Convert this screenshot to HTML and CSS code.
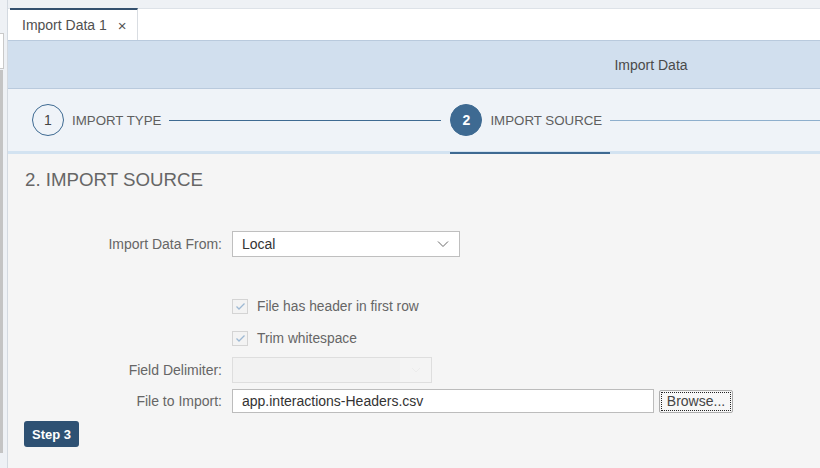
FILE: index.html
```html
<!DOCTYPE html>
<html>
<head>
<meta charset="utf-8">
<link rel="stylesheet" href="styles.css">
</head>
<body>
<div class="app">
  <aside class="side">
    <div class="side-box"></div>
    <div class="side-scroll"></div>
  </aside>
  <main class="main">
    <div class="tabstrip">
      <div class="tab"><span class="tab-label">Import Data 1</span><span class="tab-close">×</span></div>
    </div>
    <div class="titlebar">Import Data</div>
    <nav class="steps">
      <div class="step">
        <span class="step-num">1</span>
        <span class="step-label">IMPORT TYPE</span>
      </div>
      <div class="connector done"></div>
      <div class="step active">
        <span class="step-num">2</span>
        <span class="step-label">IMPORT SOURCE</span>
      </div>
      <div class="connector todo"></div>
    </nav>
    <section class="content">
      <h2 class="page-title">2. IMPORT SOURCE</h2>
      <div class="form">
        <div class="row row-select">
          <label class="lbl">Import Data From:</label>
          <div class="select">
            <span>Local</span>
            <svg class="chev" width="12" height="8" viewBox="0 0 12 8"><polyline points="1,1.5 6,6.5 11,1.5" fill="none" stroke="#6a6a6a" stroke-width="1"/></svg>
          </div>
        </div>
        <div class="row row-check first">
          <span class="lbl"></span>
          <span class="check"><svg width="11" height="9" viewBox="0 0 11 9"><polyline points="1.5,4.5 4,7 9.5,1.5" fill="none" stroke="#9db8d3" stroke-width="1.3"/></svg></span>
          <span class="check-text">File has header in first row</span>
        </div>
        <div class="row row-check">
          <span class="lbl"></span>
          <span class="check"><svg width="11" height="9" viewBox="0 0 11 9"><polyline points="1.5,4.5 4,7 9.5,1.5" fill="none" stroke="#9db8d3" stroke-width="1.3"/></svg></span>
          <span class="check-text">Trim whitespace</span>
        </div>
        <div class="row row-delim">
          <label class="lbl">Field Delimiter:</label>
          <div class="delim">
            <span class="delim-field"></span>
            <span class="delim-btn"><svg width="10" height="6" viewBox="0 0 10 6"><polyline points="1,1 5,5 9,1" fill="none" stroke="#ececec" stroke-width="1"/></svg></span>
          </div>
        </div>
        <div class="row row-file">
          <label class="lbl">File to Import:</label>
          <div class="file-input">app.interactions-Headers.csv</div>
          <button class="browse"><span class="browse-inner">Browse...</span></button>
        </div>
      </div>
      <button class="step-btn">Step 3</button>
    </section>
  </main>
</div>
</body>
</html>
```

FILE: styles.css
```css
* { box-sizing: border-box; }
html, body { margin: 0; padding: 0; }
body {
  width: 820px;
  height: 468px;
  overflow: hidden;
  font-family: "Liberation Sans", Arial, sans-serif;
  background: #f5f5f5;
}
.app {
  display: flex;
  height: 468px;
  overflow: hidden;
}
.side {
  flex: none;
  width: 8px;
  background: #eef1f5;
  border-right: 1px solid #d3d9e0;
  display: flex;
  flex-direction: column;
  padding-top: 33px;
}
.side-box {
  width: 4px;
  height: 36px;
  background: #fff;
  border: 1px solid #c9c9c9;
  border-left: none;
}
.side-scroll {
  width: 3px;
  height: 383px;
  margin-top: 1px;
  background: #c4c4c4;
}
.main {
  flex: none;
  width: 1286px;
  display: flex;
  flex-direction: column;
  background: #f5f5f5;
}
.tabstrip {
  height: 40px;
  background: #fff;
  border-top: 8px solid #eef1f5;
  box-shadow: inset 0 1px 0 #dde2e8;
  display: flex;
}
.tab {
  margin-left: 2px;
  width: 128px;
  height: 32px;
  border-top: 2px solid #33506e;
  border-right: 1px solid #d9dde2;
  background: #fff;
  display: flex;
  align-items: center;
  padding-left: 12px;
  font-size: 14px;
  color: #505050;
}
.tab-label { flex: none; }
.tab-close {
  margin-left: 11px;
  font-size: 15px;
  color: #555;
}
.titlebar {
  height: 49px;
  background: #d1dfee;
  border-top: 1px solid #b9cadd;
  border-bottom: 1px solid #b9cadd;
  display: flex;
  align-items: center;
  justify-content: center;
  font-size: 14px;
  color: #4a4a4a;
}
.steps {
  height: 65px;
  background: #eff3f8;
  border-bottom: 3px solid #d3e3f1;
  display: flex;
  align-items: stretch;
  padding-left: 24px;
}
.step {
  position: relative;
  display: flex;
  align-items: center;
  padding-right: 8px;
  flex: none;
}
.step-num {
  width: 32px;
  height: 32px;
  border-radius: 50%;
  border: 1px solid #3e6a92;
  display: flex;
  align-items: center;
  justify-content: center;
  font-size: 14px;
  color: #444;
  margin-right: 8px;
}
.step-label {
  font-size: 13.3px;
  color: #5e5e5e;
}
.step.active .step-num {
  background: #3e6a92;
  color: #fff;
  font-weight: bold;
}
.step.active::after {
  content: "";
  position: absolute;
  left: 0;
  right: 0;
  bottom: -3px;
  height: 2px;
  background: #3e6a92;
}
.connector {
  align-self: center;
  height: 1px;
  margin-right: 9px;
}
.connector.done {
  width: 272px;
  flex: none;
  background: #3e6a92;
}
.connector.todo {
  flex: 1;
  margin-right: 0;
  background: #8eafcd;
}
.content {
  padding: 14px 16px 0;
  display: flex;
  flex-direction: column;
  align-items: flex-start;
}
.page-title {
  margin: 0;
  font-size: 18.7px;
  line-height: 24px;
  font-weight: normal;
  color: #666;
  padding-left: 1px;
}
.form {
  margin-top: 39px;
  margin-left: -16px;
  display: flex;
  flex-direction: column;
}
.row {
  display: flex;
  align-items: center;
}
.lbl {
  flex: none;
  width: 224px;
  padding-right: 10px;
  text-align: right;
  font-size: 14px;
  color: #666;
}
.row-select { height: 26px; }
.select {
  width: 228px;
  height: 26px;
  background: #fff;
  border: 1px solid #bfbfbf;
  display: flex;
  align-items: center;
  justify-content: space-between;
  padding: 0 10px 0 9px;
  font-size: 14px;
  color: #333;
}
.row-check { height: 24px; margin-top: 8px; }
.row-check.first { margin-top: 37px; }
.check {
  width: 16px;
  height: 15px;
  border: 1px solid #d4d4d4;
  background: #f3f3f3;
  display: flex;
  align-items: center;
  justify-content: center;
  margin-right: 9px;
}
.check-text {
  font-size: 13.8px;
  color: #666;
}
.row-delim { height: 26px; margin-top: 7px; }
.delim {
  width: 200px;
  height: 26px;
  border: 1px solid #dedede;
  background: #f2f2f2;
  display: flex;
}
.delim-field { flex: 1; }
.delim-btn {
  width: 31px;
  display: flex;
  align-items: center;
  justify-content: center;
  background: #f4f4f4;
}
.row-file { height: 24px; margin-top: 6px; }
.file-input {
  width: 422px;
  height: 24px;
  background: #fff;
  border: 1px solid #bcbcbc;
  display: flex;
  align-items: center;
  padding-left: 9px;
  font-size: 14px;
  color: #333;
}
.browse {
  margin-left: 5px;
  width: 74px;
  height: 23px;
  padding: 1px;
  border: 1px solid #adadad;
  border-radius: 2px;
  background: #f7f7f7;
  font-family: "Liberation Sans", Arial, sans-serif;
  font-size: 14px;
  color: #444;
  display: flex;
}
.browse-inner {
  flex: 1;
  border: 1px dotted #222;
  display: flex;
  align-items: center;
  justify-content: center;
}
.step-btn {
  margin-top: 8px;
  height: 26px;
  padding: 0 8px;
  border: none;
  border-radius: 3px;
  background: #2e5173;
  color: #fff;
  font-family: "Liberation Sans", Arial, sans-serif;
  font-size: 13px;
  font-weight: bold;
}
```
